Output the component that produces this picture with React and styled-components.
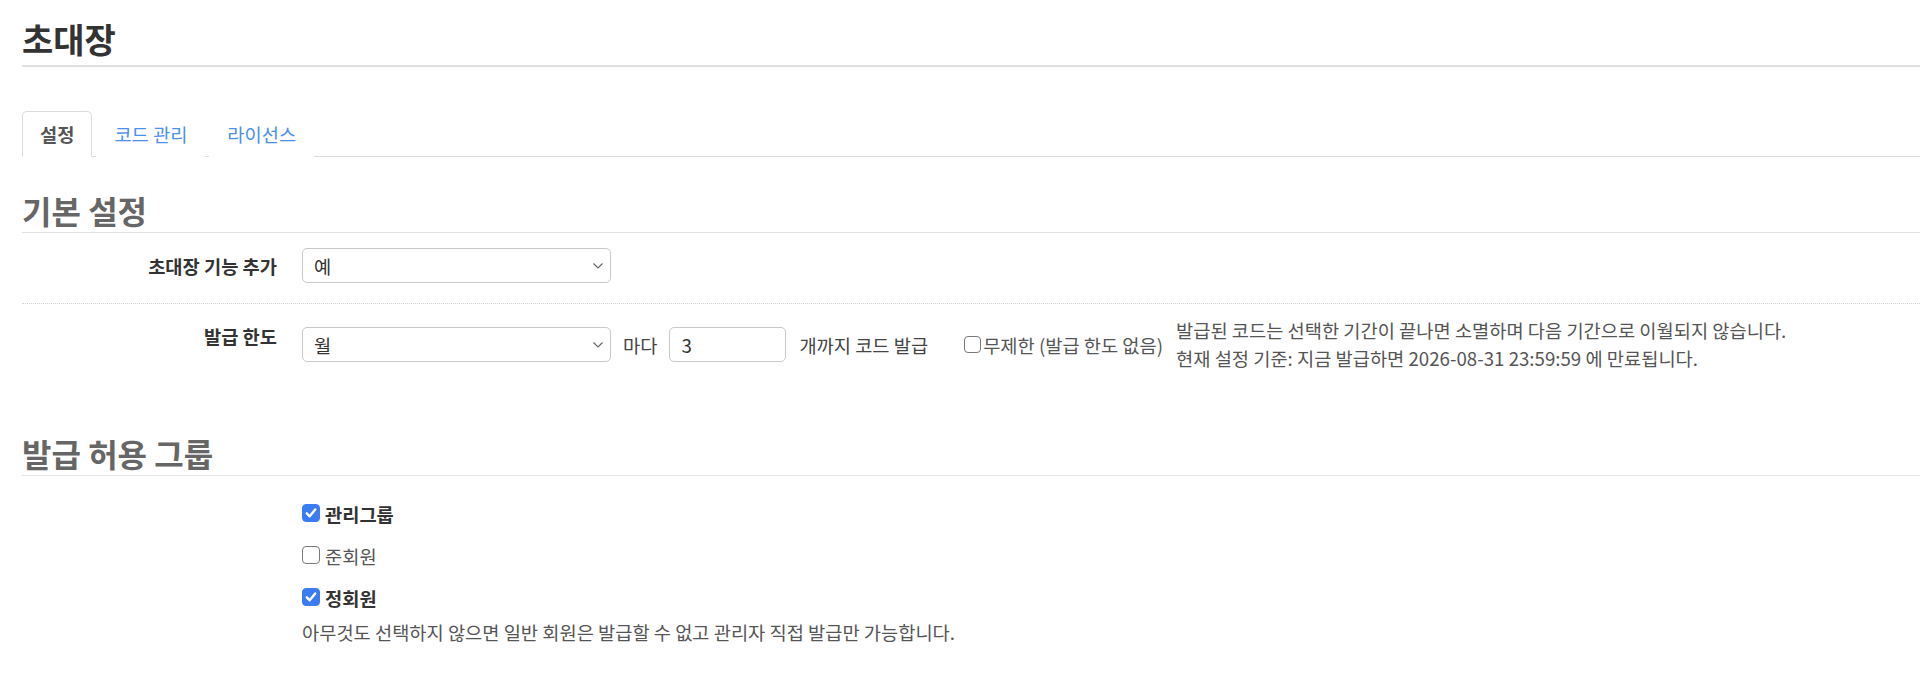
import { useState } from 'react';
import styled, { createGlobalStyle } from 'styled-components';

const GlobalStyle = createGlobalStyle`
  body {
    margin: 0;
    background: #fff;
    color: #333;
    font-family: "Noto Sans CJK KR", "Noto Sans", sans-serif;
    font-size: 18.7px;
  }
`;

const Page = styled.div`
  padding: 19px 0 40px 22px;
`;

const Title = styled.h1`
  margin: 0;
  padding-bottom: 6px;
  font-size: 34px;
  line-height: 40px;
  font-weight: 700;
  color: #333;
  border-bottom: 2px solid #e0e0e0;
`;

const Tabs = styled.nav`
  display: flex;
  margin-top: 44px;
  border-bottom: 1px solid #dcdcdc;
`;

const Tab = styled.a`
  display: block;
  margin: 0 4px -1px 0;
  padding: 0 17px;
  line-height: 44px;
  text-decoration: none;
  cursor: pointer;
  border: 1px solid ${({ $active }) => ($active ? '#dcdcdc' : 'transparent')};
  border-bottom-color: ${({ $active }) => ($active ? '#fff' : 'transparent')};
  border-radius: 5px 5px 0 0;
  background: #fff;
  color: ${({ $active }) => ($active ? '#555' : '#4b90ec')};
  font-weight: ${({ $active }) => ($active ? 700 : 400)};
`;

const SectionTitle = styled.h2`
  margin: ${({ $top }) => $top}px 0 0;
  padding-bottom: 4px;
  font-size: 32px;
  line-height: 36px;
  font-weight: 700;
  color: #666;
  border-bottom: 1px solid #e2e2e2;
`;

const Row = styled.div`
  display: grid;
  grid-template-columns: 255px 1fr;
  column-gap: 25px;
  padding: ${({ $pad }) => $pad};
  border-bottom: ${({ $dotted }) => ($dotted ? '1px dotted #d4d4d4' : 'none')};
`;

const Label = styled.div`
  align-self: start;
  padding-top: ${({ $top }) => $top || 0}px;
  text-align: right;
  font-weight: 700;
  line-height: 35px;
  color: #333;
`;

const Controls = styled.div`
  display: flex;
  align-items: center;
`;

const SelectWrap = styled.div`
  position: relative;
  width: 309px;
  height: 35px;
  flex: none;
`;

const Select = styled.select`
  appearance: none;
  width: 100%;
  height: 100%;
  padding: 0 30px 0 11px;
  border: 1px solid #c9c9c9;
  border-radius: 5px;
  background: #fff;
  color: #333;
  font: inherit;
  box-sizing: border-box;
`;

const Chevron = styled.svg`
  position: absolute;
  right: 7px;
  top: 14px;
  pointer-events: none;
`;

const Text = styled.span`
  margin-left: ${({ $left }) => $left}px;
  color: #444;
  white-space: nowrap;
`;

const NumberInput = styled.input`
  width: 117px;
  height: 35px;
  margin-left: 12px;
  padding: 0 11px;
  border: 1px solid #c9c9c9;
  border-radius: 5px;
  color: #333;
  font: inherit;
  box-sizing: border-box;
`;

const CheckLabel = styled.label`
  display: flex;
  align-items: center;
  margin-left: ${({ $left }) => $left || 0}px;
  height: ${({ $height }) => $height || 'auto'};
  color: ${({ $bold }) => ($bold ? '#333' : '#555')};
  font-weight: ${({ $bold }) => ($bold ? 700 : 400)};
  white-space: nowrap;
  cursor: pointer;
`;

const Box = styled.span`
  display: inline-flex;
  align-items: center;
  justify-content: center;
  width: ${({ $size }) => $size}px;
  height: ${({ $size }) => $size}px;
  margin-right: ${({ $gap }) => $gap}px;
  box-sizing: border-box;
  border-radius: 4px;
  border: 1px solid ${({ $checked }) => ($checked ? '#3b7cf2' : '#7a7a7a')};
  background: ${({ $checked }) => ($checked ? '#3b7cf2' : '#fff')};
  flex: none;
`;

const Help = styled.div`
  margin-left: ${({ $left }) => $left || 0}px;
  margin-top: ${({ $top }) => $top || 0}px;
  line-height: 28px;
  color: #555;
  white-space: nowrap;
`;

const Group = styled.div`
  display: flex;
  flex-direction: column;
`;

const Check = ({ checked, size = 18, gap = 5, children, ...rest }) => (
  <CheckLabel {...rest}>
    <Box $checked={checked} $gap={gap} $size={size}>
      {checked ? (
        <svg width="14" height="14" viewBox="0 0 13 13">
          <path d="M2.6 6.8 L5.3 9.6 L10.4 3.2" fill="none" stroke="#fff" strokeWidth="2.2" strokeLinecap="round" strokeLinejoin="round" />
        </svg>
      ) : null}
    </Box>
    {children}
  </CheckLabel>
);

const Dropdown = ({ value, options }) => (
  <SelectWrap>
    <Select defaultValue={value}>
      {options.map((o) => <option key={o}>{o}</option>)}
    </Select>
    <Chevron width="12" height="8" viewBox="0 0 12 8">
      <path d="M1.5 1.5 L6 6 L10.5 1.5" fill="none" stroke="#666" strokeWidth="1.2" />
    </Chevron>
  </SelectWrap>
);

const groups = [
  { name: '관리그룹', checked: true },
  { name: '준회원', checked: false },
  { name: '정회원', checked: true },
];

export default function App() {
  const [tab, setTab] = useState('settings');

  return (
    <Page>
      <GlobalStyle />
      <Title>초대장</Title>
      <Tabs>
        <Tab $active={tab === 'settings'} onClick={() => setTab('settings')}>설정</Tab>
        <Tab $active={tab === 'codes'} onClick={() => setTab('codes')}>코드 관리</Tab>
        <Tab $active={tab === 'license'} onClick={() => setTab('license')}>라이선스</Tab>
      </Tabs>

      <SectionTitle $top={35}>기본 설정</SectionTitle>
      <Row $pad="15px 0 20px" $dotted>
        <Label>초대장 기능 추가</Label>
        <Controls>
          <Dropdown value="예" options={['예', '아니오']} />
        </Controls>
      </Row>
      <Row $pad="12px 0">
        <Label $top={2}>발급 한도</Label>
        <Controls>
          <Dropdown value="월" options={['일', '주', '월', '년']} />
          <Text $left={12}>마다</Text>
          <NumberInput defaultValue="3" />
          <Text $left={13}>개까지 코드 발급</Text>
          <Check checked={false} size={17} gap={2} $left={36}>무제한 (발급 한도 없음)</Check>
          <Help $left={13}>
            발급된 코드는 선택한 기간이 끝나면 소멸하며 다음 기간으로 이월되지 않습니다.
            <br />
            현재 설정 기준: 지금 발급하면 2026-08-31 23:59:59 에 만료됩니다.
          </Help>
        </Controls>
      </Row>

      <SectionTitle $top={51}>발급 허용 그룹</SectionTitle>
      <Row $pad="16px 0 0">
        <div />
        <Group>
          {groups.map((g) => (
            <Check key={g.name} checked={g.checked} $bold={g.checked} $height="42px">
              {g.name}
            </Check>
          ))}
          <Help $top={0}>아무것도 선택하지 않으면 일반 회원은 발급할 수 없고 관리자 직접 발급만 가능합니다.</Help>
        </Group>
      </Row>
    </Page>
  );
}
